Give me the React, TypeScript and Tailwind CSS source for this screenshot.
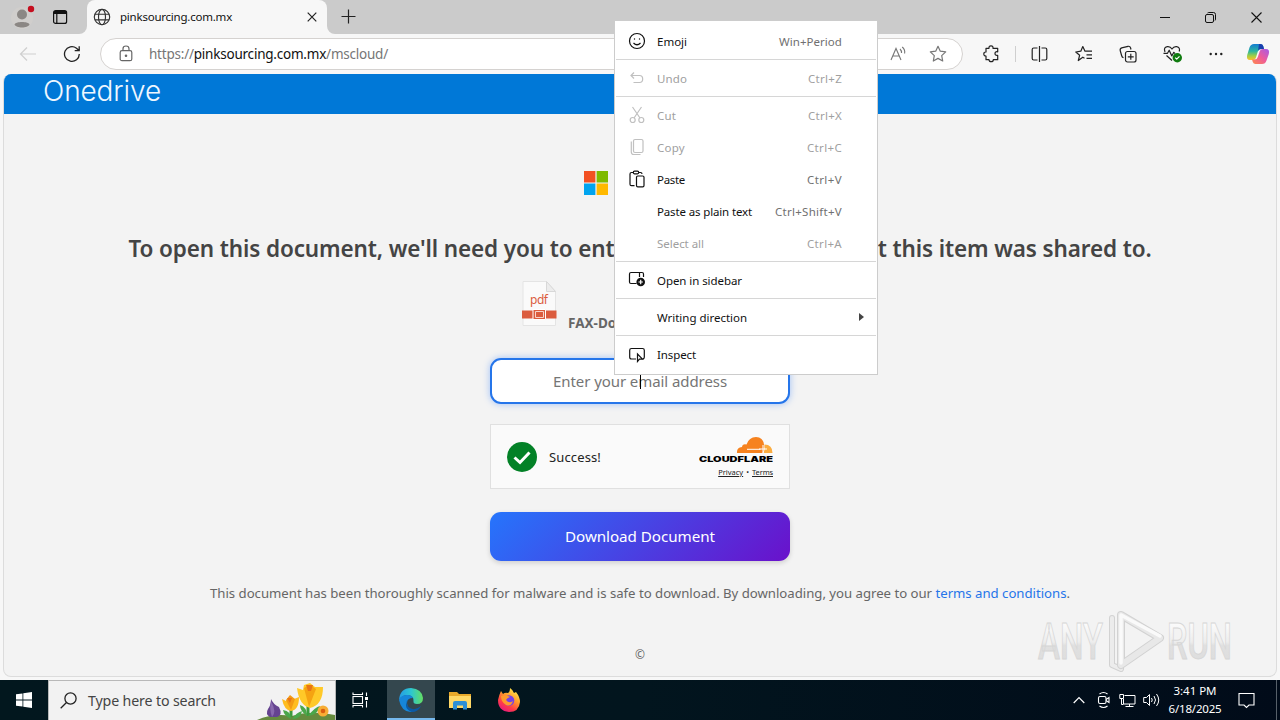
import { useLayoutEffect, useRef } from 'react';
import type { ReactNode } from 'react';

/** Single line of text, tracked so that it fills the given width. */
function Fit({ w, className = '', children }: { w: number; className?: string; children: ReactNode }) {
  const ref = useRef<HTMLSpanElement>(null);
  useLayoutEffect(() => {
    const el = ref.current;
    if (!el) return;
    el.style.letterSpacing = '0px';
    const n = (el.textContent || '').length;
    const natural = el.getBoundingClientRect().width;
    el.style.letterSpacing = `${(w - natural) / n}px`;
  }, [w]);
  return <span ref={ref} className={`inline-block shrink-0 whitespace-pre ${className}`}>{children}</span>;
}

function TabBar() {
  return (
    <div className="flex h-[34px] shrink-0 bg-[#f7f7f7]">
      <div className="flex w-[87px] items-center rounded-br-lg bg-[#cbcbcb] pl-[11px]">
        <svg width="24" height="26" viewBox="0 0 24 26" className="-mt-px">
          <circle cx="11" cy="14" r="11" fill="#d0cecc" />
          <circle cx="11" cy="10.500" r="5" fill="#8b8784" />
          <path d="M3.500 20.500C4 17 18 17 18.500 20.500C17 24.500 5 24.500 3.500 20.500Z" fill="#8b8784" />
          <circle cx="20" cy="5" r="3.200" fill="#c50f1f" />
        </svg>
        <svg width="16" height="16" viewBox="0 0 16 16" className="ml-[17px]" fill="none" stroke="#111" strokeWidth="1.200">
          <rect x="1.600" y="1.600" width="13" height="12.800" rx="2" />
          <path d="M2 3.500H14.500" strokeWidth="3" />
          <path d="M4.800 4V14" />
        </svg>
      </div>
      <div className="w-[240px] bg-[#cbcbcb]">
        <div className="flex h-full items-center rounded-t-lg bg-[#f7f7f7] pl-[6px]">
          <svg width="18" height="18" viewBox="0 0 18 18" fill="none" stroke="#333" strokeWidth="1.150">
            <circle cx="9" cy="9" r="7.700" /><ellipse cx="9" cy="9" rx="3.500" ry="7.700" /><path d="M2 6.200H16M2 11.800H16" />
          </svg>
          <Fit w={112} className="ml-[9px] text-[11.500px] text-[#111]">pinksourcing.com.mx</Fit>
          <svg width="10" height="10" viewBox="0 0 10 10" className="ml-[75px]" stroke="#222" strokeWidth="1.200"><path d="M.7.7 9.300 9.300M9.300.7.7 9.300" /></svg>
        </div>
      </div>
      <div className="flex grow items-center rounded-bl-lg bg-[#cbcbcb] pl-[14px]">
        <svg width="15" height="15" viewBox="0 0 15 15" className="-mt-px" stroke="#222" strokeWidth="1.200"><path d="M7.500.5V14.500M.5 7.500H14.500" /></svg>
      </div>
      <div className="flex items-center bg-[#cbcbcb] pr-[18px]">
        <svg width="10" height="10" viewBox="0 0 10 10" stroke="#111"><path d="M0 5.500H10" /></svg>
        <svg width="11" height="11" viewBox="0 0 11 11" className="ml-[35px]" fill="none" stroke="#111"><rect x=".5" y="2.500" width="8" height="8" rx="1.500" /><path d="M2.500 1C3 .6 3.500.5 4 .5H8.500Q10.500.5 10.500 2.500V7Q10.500 8 10 8.500" /></svg>
        <svg width="11" height="11" viewBox="0 0 11 11" className="ml-[35px]" stroke="#111" strokeWidth="1.100"><path d="M.5.5 10.500 10.500M10.500.5.5 10.500" /></svg>
      </div>
    </div>
  );
}

function Copilot() {
  return (
    <svg width="24" height="24" viewBox="0 0 24 24">
      <defs>
        <linearGradient id="cpA" x1="0" y1="0" x2="0" y2="1"><stop stopColor="#147bd1" /><stop offset=".45" stopColor="#2bb5a0" /><stop offset=".75" stopColor="#a3cf43" /><stop offset="1" stopColor="#ffbf2e" /></linearGradient>
        <linearGradient id="cpB" x1="1" y1="0" x2="0" y2="1"><stop stopColor="#a55be8" /><stop offset=".5" stopColor="#ee5b9b" /><stop offset="1" stopColor="#ff8a4c" /></linearGradient>
      </defs>
      <path d="M8 2H14.500Q16.500 2 17.200 4L18 7H15Q12.500 7 11.800 9.500L10 15.500Q9.300 18 7 18H4Q0 18 1.200 13L3.500 5.500Q4.600 2 8 2Z" fill="url(#cpA)" />
      <path d="M13 2H14.500Q16.500 2 17.200 4L18 7H15Q12.700 7 12 9Z" fill="#1a3fae" />
      <path d="M16 22H9.500Q7.500 22 6.800 20L6 17.500H8.500Q11 17.500 11.800 15L13.800 9Q14.500 7 17 7H20Q24 7 22.800 12L20.500 18.500Q19.400 22 16 22Z" fill="url(#cpB)" />
    </svg>
  );
}

function Toolbar() {
  return (
    <div className="flex h-[40px] shrink-0 items-center bg-[#f7f7f7] pl-[19px] pr-[10px]">
      <svg width="18" height="16" viewBox="0 0 18 16" fill="none" stroke="#cfcfcf" strokeWidth="1.200"><path d="M17 8H1.500M8 1.500 1.500 8 8 14.500" /></svg>
      <svg width="18" height="18" viewBox="0 0 18 18" className="ml-[26px]" fill="none" stroke="#222" strokeWidth="1.300"><path d="M16.300 9A7.400 7.400 0 1 1 13.500 3.200L16 5.500M16.200 1.200V5.700H11.700" /></svg>
      <div className="ml-[19px] flex h-8 w-[863px] items-center rounded-full border border-[#d5d2d0] bg-white pl-[18px] pr-[15px]">
        <svg width="14" height="17" viewBox="0 0 14 17" className="-mt-px" fill="none" stroke="#666" strokeWidth="1.200"><rect x="1.200" y="5.700" width="11.600" height="10" rx="1.800" /><path d="M4 5.500V3.800Q4 1 7 1T10 3.800V5.500" /><circle cx="7" cy="10.700" r=".7" fill="#666" /></svg>
        <Fit w={239} className="ml-[16px] text-[13.500px] text-[#767676]">https://<span className="text-[#111]">pinksourcing.com.mx</span>/mscloud/</Fit>
        <div className="grow" />
        <svg width="17" height="16" viewBox="0 0 17 16" className="-mt-px" fill="none" stroke="#777" strokeWidth="1.100"><path d="M1 14 6 2.500 11 14M2.800 10H9.200M10 3Q11.800 4.700 11.500 7M12.200 1Q15.400 3.800 14.600 7.500" /></svg>
        <svg width="18" height="18" viewBox="0 0 18 18" className="ml-[22px]" fill="none" stroke="#777" strokeWidth="1.200" strokeLinejoin="round"><path d="M9 1.300 11.300 6.200 16.700 6.900 12.700 10.600 13.700 16 9 13.400 4.300 16 5.300 10.600 1.300 6.900 6.700 6.200Z" /></svg>
      </div>
      <svg width="18" height="18" viewBox="0 0 18 18" className="ml-[20px]" fill="none" stroke="#222" strokeWidth="1.200" strokeLinejoin="round"><path d="M3 3.300H6Q5.800.8 8 .8T10 3.300H14.700V6.800Q12 6.200 12 8.500T14.700 10.300V14.700H10.300Q10.300 16.700 8.200 16.700T6 14.700H3V11Q.8 11 .8 9T3 7Z" /></svg>
      <div className="ml-[14px] h-[16px] w-px bg-[#cfcfcf]" />
      <svg width="17" height="18" viewBox="0 0 17 18" className="ml-[15px]" fill="none" stroke="#222" strokeWidth="1.200"><path d="M6.500 3H2.800Q1.200 3 1.200 4.500V13.500Q1.200 15 2.800 15H6.500M10.500 3H14.200Q15.800 3 15.800 4.500V13.500Q15.800 15 14.200 15H10.500M8.500 1V17" /></svg>
      <svg width="18" height="18" viewBox="0 0 18 18" className="ml-[27px]" fill="none" stroke="#222" strokeWidth="1.200" strokeLinejoin="round"><path d="M9.500 13.200 7.800 12.200 3.300 15.500 4.600 10.300.8 7 5.800 6.200 7.800 1.500 10 6.200H17M11.500 9.800H17M11.500 13.400H17" /></svg>
      <svg width="18" height="18" viewBox="0 0 18 18" className="ml-[26px]" fill="none" stroke="#222" strokeWidth="1.200"><rect x="6.500" y="6.500" width="10.500" height="10.500" rx="2" /><path d="M11.800 8.800V14.700M8.800 11.800H14.700M4.500 12.800Q3 12.300 2.600 10.500L1.200 5.500Q.8 3.500 2.700 2.900L9 1.300Q11 .9 11.600 3L12 4.500" /></svg>
      <svg width="20" height="18" viewBox="0 0 20 18" className="ml-[26px]" fill="none" stroke="#222" strokeWidth="1.200" strokeLinejoin="round"><path d="M2 7Q.2 2.300 4.300 1.700Q7.300 1.300 9 4Q10.700 1.300 13.700 1.700Q17.500 2.300 16.200 6.500M3.500 10.500 9 15.500M.5 8.300H4.500L6.200 5.200 8.800 11 10.800 7.300 12 8.500" /><circle cx="14.300" cy="12.700" r="4.700" fill="#107c10" stroke="none" /><path d="M12.200 12.700 13.700 14.200 16.500 11.300" stroke="#fff" /></svg>
      <svg width="14" height="4" viewBox="0 0 14 4" className="ml-[26px]" fill="#222"><circle cx="1.700" cy="2" r="1.200" /><circle cx="7" cy="2" r="1.200" /><circle cx="12.300" cy="2" r="1.200" /></svg>
      <div className="grow" />
      <Copilot />
    </div>
  );
}

function Cloudflare() {
  return (
    <svg width="74" height="27" viewBox="0 0 74 27">
      <path d="M38 16Q37.500 10.500 43 10Q43.500 6.500 47.500 7.500Q50 0 57 0Q64 0 65 7.500Q66 11.500 63.500 16Z" fill="#f6821f" />
      <path d="M64.500 16Q66.500 12 65.500 7.500Q73.500 7.500 73.500 16Z" fill="#fbad41" />
      <path d="M48 12.300H61.500M64 8V16M60 12H68" stroke="#fff" strokeWidth="1" />
      <text x="0" y="25" fontFamily="Inter" fontWeight="900" fontSize="7.800" textLength="74" lengthAdjust="spacingAndGlyphs" fill="#000">CLOUDFLARE</text>
    </svg>
  );
}

function Page() {
  return (
    <div className="mx-[3px] flex h-[603px] shrink-0 flex-col items-center overflow-hidden rounded-lg border border-[#dcdcdc] border-t-0 bg-[#f3f3f3]">
      <div className="h-[40px] w-full shrink-0 bg-[#0078d7] pl-[39px] leading-[34px]">
        <Fit w={118} className="font-['Inter'] text-[28px] font-[350] text-[#eef7ff]">Onedrive</Fit>
      </div>
      <div className="mt-[57px] flex w-[112px] shrink-0">
        <svg width="24" height="24" viewBox="0 0 24 24"><path fill="#f25022" d="M0 0H11.400V11.400H0Z" /><path fill="#7fba00" d="M12.600 0H24V11.400H12.600Z" /><path fill="#00a4ef" d="M0 12.600H11.400V24H0Z" /><path fill="#ffb900" d="M12.600 12.600H24V24H12.600Z" /></svg>
      </div>
      <div className="mt-[38px] h-[32px] text-[22.500px] leading-[32px] font-semibold text-[#444]">
        <Fit w={1023}>To open this document, we'll need you to enter the email address that this item was shared to.</Fit>
      </div>
      <div className="mt-[16px] flex h-[50px] w-[236px]">
        <svg width="36" height="46" viewBox="0 0 36 46" className="shrink-0">
          <path d="M1 .5H24.500L33.500 10.500V44.500H1Z" fill="#fafafa" stroke="#e4e4e4" />
          <path d="M24.500.5V10.500H33.500Z" fill="#ececec" stroke="#d8d8d8" />
          <text x="8" y="23" fontSize="12" fontFamily="Noto Sans" textLength="18" fill="#db5c3e">pdf</text>
          <path d="M0 29.500H34.500V37.500H0Z" fill="#db5c3e" />
          <path d="M11 28.500H23.500V38.500H11Z" fill="#db5c3e" stroke="#fff" />
          <path d="M13.500 30.500H21.500V36.500H13.500Z" fill="none" stroke="#f8d4ca" />
        </svg>
        <Fit w={176} className="ml-[10px] mt-[32px] text-[13.500px] leading-[20px] font-bold text-[#666]">FAX-Document 061825.pdf</Fit>
      </div>
      <div className="mt-[27px] flex h-[46px] w-[300px] shrink-0 items-center justify-center rounded-[11px] border-2 border-[#2575ea] bg-white shadow-[0_0_7px_rgba(37,117,252,0.4)]">
        <Fit w={174} className="text-[15px] text-[#757575]">Enter your email address</Fit>
        <div className="-ml-[87px] h-[16px] w-px bg-black" />
        <div className="w-[86px]" />
      </div>
      <div className="mt-[20px] flex h-[65px] w-[300px] shrink-0 items-center border border-[#e0e0e0] bg-[#fafafa] pl-[16px] pr-[16px]">
        <svg width="30" height="30" viewBox="0 0 30 30"><circle cx="15" cy="15" r="15" fill="#038127" /><path d="M7.500 15.500 13 20.500 22.500 10.500" fill="none" stroke="#fff" strokeWidth="3" /></svg>
        <Fit w={52} className="ml-[12px] mt-[2px] text-[13px] text-[#232323]">Success!</Fit>
        <div className="grow" />
        <div className="flex flex-col items-end">
          <Cloudflare />
          <div className="mt-[4px] flex h-[9px] items-center text-[7.500px] leading-[9px] text-[#232323]"><Fit w={25} className="underline">Privacy</Fit><span className="mx-[3px]">•</span><Fit w={21} className="underline">Terms</Fit></div>
        </div>
      </div>
      <div className="mt-[23px] flex h-[49px] w-[300px] shrink-0 items-center justify-center rounded-[11px] bg-[linear-gradient(135deg,#2575fc,#6a11cb)] text-[15.200px] text-white shadow-[0_2px_5px_rgba(0,0,0,0.15)]"><Fit w={150}>Download Document</Fit></div>
      <div className="mt-[22px] h-[20px] text-[13.200px] leading-[20px] text-[#666]">
        <Fit w={860}>This document has been thoroughly scanned for malware and is safe to download. By downloading, you agree to our <span className="text-[#2575ea]">terms and conditions</span>.</Fit>
      </div>
      <div className="mt-[42px] text-[12px] leading-[20px] text-[#666]">©</div>
    </div>
  );
}

const emoji = <svg width="18" height="18" viewBox="0 0 18 18" fill="none" stroke="currentColor" strokeWidth="1.200"><circle cx="9" cy="9" r="7.500" /><path d="M5.500 11Q9 14.500 12.500 11" /><circle cx="6.500" cy="7" r=".7" fill="currentColor" stroke="none" /><circle cx="11.500" cy="7" r=".7" fill="currentColor" stroke="none" /></svg>;
const undo = <svg width="18" height="18" viewBox="0 0 18 18" fill="none" stroke="currentColor" strokeWidth="1.200"><path d="M6 3.500 3 6.500 6 9.500M3 6.500H11.500Q14.700 6.500 14.700 10T11.500 13.500H5.500" /></svg>;
const cut = <svg width="18" height="18" viewBox="0 0 18 18" fill="none" stroke="currentColor" strokeWidth="1.200"><circle cx="4.700" cy="14" r="2.500" /><circle cx="13.300" cy="14" r="2.500" /><path d="M4.500 1 12 12M13.500 1 6 12" /></svg>;
const copy = <svg width="18" height="18" viewBox="0 0 18 18" fill="none" stroke="currentColor" strokeWidth="1.200"><rect x="5.500" y="1.500" width="9.500" height="13" rx="1.500" /><path d="M3.300 3.500V14Q3.300 16.500 5.800 16.500H12.500" /></svg>;
const paste = <svg width="18" height="18" viewBox="0 0 18 18" fill="none" stroke="currentColor" strokeWidth="1.200"><rect x="8.500" y="6" width="7.500" height="10.800" rx="1.300" /><path d="M6.500 15.700H3.500Q2 15.700 2 14.200V4Q2 2.500 3.500 2.500H5.300M10.700 2.500H12.500Q14 2.500 14 4" /><rect x="5.300" y="1.200" width="5.400" height="2.600" rx="1.200" /></svg>;
const sidebar = <svg width="18" height="18" viewBox="0 0 18 18" fill="none" stroke="currentColor" strokeWidth="1.200"><path d="M8.500 12.500H3Q1.500 12.500 1.500 11V3Q1.500 1.500 3 1.500H14Q15.500 1.500 15.500 3V6M11.500 1.500V6" /><circle cx="12.700" cy="11" r="4.300" fill="currentColor" stroke="none" /><path d="M12.700 8.800V13.200M10.500 11H14.900" stroke="#fff" /></svg>;
const inspect = <svg width="18" height="18" viewBox="0 0 18 18" fill="none" stroke="currentColor" strokeWidth="1.200"><path d="M8 14H3.500Q1.700 14 1.700 12.300V5.300Q1.700 3.500 3.500 3.500H14.500Q16.300 3.500 16.300 5.300V12.300Q16.300 14 14.500 14" /><path d="M9.500 9V16.500L11.500 14.200H14.500Z" fill="#fff" /></svg>;

function Item({ icon, label, w, keys, kw = 0, off, arrow }: { icon?: ReactNode; label: string; w: number; keys?: string; kw?: number; off?: boolean; arrow?: boolean }) {
  return (
    <div className={`flex h-8 shrink-0 items-center pl-[13px] pr-[35px] text-[11.500px] ${off ? 'text-[#a0a0a0]' : 'text-[#111]'}`}>
      <div className={`mr-[11px] w-[18px] shrink-0 ${off ? 'text-[#c0c0c0]' : ''}`}>{icon}</div>
      <Fit w={w} className="mt-[2px]">{label}</Fit>
      <div className="grow" />
      {keys && <Fit w={kw} className={`mt-[2px] ${off ? '' : 'text-[#707070]'}`}>{keys}</Fit>}
      {arrow && <svg width="5" height="8" viewBox="0 0 5 8" className="-mr-[22px]"><path d="M0 0 5 4 0 8Z" fill="#444" /></svg>}
    </div>
  );
}

const Rule = () => <div className="mx-px my-[2px] h-px shrink-0 bg-[#d6d6d6]" />;

function ContextMenu() {
  return (
    <div className="absolute left-[614px] top-[20px] flex h-[355px] w-[264px] flex-col border border-[#ccc] bg-white pt-[4px]">
      <Item icon={emoji} label="Emoji" w={30} keys="Win+Period" kw={63} />
      <Rule />
      <Item icon={undo} label="Undo" w={30} keys="Ctrl+Z" kw={34} off />
      <Rule />
      <Item icon={cut} label="Cut" w={19} keys="Ctrl+X" kw={34} off />
      <Item icon={copy} label="Copy" w={28} keys="Ctrl+C" kw={35} off />
      <Item icon={paste} label="Paste" w={28} keys="Ctrl+V" kw={35} />
      <Item label="Paste as plain text" w={95} keys="Ctrl+Shift+V" kw={67} />
      <Item label="Select all" w={47} keys="Ctrl+A" kw={35} off />
      <Rule />
      <Item icon={sidebar} label="Open in sidebar" w={85} />
      <Rule />
      <Item label="Writing direction" w={90} arrow />
      <Rule />
      <Item icon={inspect} label="Inspect" w={39} />
    </div>
  );
}

function Watermark() {
  return (
    <svg className="absolute left-[1034px] top-[604px]" width="220" height="74" viewBox="0 0 220 74" fill="none">
      <defs>
        <linearGradient id="wm" x1="0" y1="0" x2="0" y2="1"><stop offset=".2" stopColor="#fafafa" /><stop offset=".5" stopColor="#ededed" /><stop offset=".56" stopColor="#e0e0e0" /><stop offset="1" stopColor="#dcdcdc" /></linearGradient>
      </defs>
      <g fontFamily="Roboto" fontWeight="500" fontSize="50" fill="url(#wm)" stroke="#d6d6d6" strokeWidth="1">
        <text x="4" y="55" textLength="65" lengthAdjust="spacingAndGlyphs">ANY</text>
        <text x="133" y="55" textLength="65" lengthAdjust="spacingAndGlyphs">RUN</text>
      </g>
      <g strokeLinejoin="round" strokeLinecap="round">
        <path d="M78 14V61L87 65" stroke="#d2d2d2" strokeWidth="6" /><path d="M78 14V61L87 65" stroke="#ececec" strokeWidth="4" />
        <path d="M87 11 126 34 87 61Z" stroke="#d2d2d2" strokeWidth="8" />
        <path d="M87 11 126 34 87 61Z" stroke="#e8e8e8" strokeWidth="6" />
        <path d="M87 59V11L126 32" stroke="#fafafa" strokeWidth="3.500" />
      </g>
    </svg>
  );
}

function Flowers() {
  return (
    <svg width="80" height="39" viewBox="0 0 80 39">
      <path d="M2 39Q18 32 37 35Q56 29 80 34V39Z" fill="#668b3e" />
      <path d="M36 36V24M53 35V17" stroke="#3d9a3c" strokeWidth="3" />
      <path d="M36 38Q29 35 28 29Q36 30 36 38ZM37 38Q42 31 47 30Q46 38 37 38ZM52 35Q45 30 45 24Q52 26 52 35ZM53 35Q60 26 65 25Q63 34 53 35Z" fill="#4aa74a" />
      <path d="M16 18Q18 23 24 26Q28 34 22 36H15Q10 33 13 28Q16 24 16 18Z" fill="#654390" /><path d="M16 20Q14 28 17 36Q22 31 16 20Z" fill="#8768ad" />
      <path d="M27 18 31 20 35 15 39 18 44 16Q44 29 36 30Q29 29 27 18Z" fill="#ffbc1f" /><path d="M31 19 36 29 40 18 35 14Z" fill="#f39a13" /><path d="M32 17H37L35 22Z" fill="#e87516" />
      <path d="M42 7 48 9 49 4 55 2 60 6 68 6Q68 24 55 27Q44 24 42 7Z" fill="#ffc928" /><path d="M49 7 54 26 61 8 55 4Z" fill="#f5a311" /><path d="M51 4H58L56 10H53Z" fill="#e87516" />
      <circle cx="68" cy="30" r="5.500" fill="#f7ad35" /><circle cx="68" cy="30" r="2.300" fill="#d95e10" />
    </svg>
  );
}

function Taskbar() {
  return (
    <div className="flex h-[40px] shrink-0 bg-[linear-gradient(90deg,#02171e,#02151e_50%,#010b19)]">
      <div className="flex w-[48px] items-center justify-center"><svg width="16" height="16" viewBox="0 0 16 16" fill="#fff"><path d="M0 2.300 6.500 1.400V7.600H0ZM7.300 1.300 16 0V7.600H7.300ZM0 8.400H6.500V14.600L0 13.700ZM7.300 8.400H16V16L7.300 14.700Z" /></svg></div>
      <div className="flex w-[288px] items-center border border-b-0 border-[#b8b8b8] bg-[#f2f2f2] pl-[11px]">
        <svg width="17" height="17" viewBox="0 0 17 17" fill="none" stroke="#222" strokeWidth="1.300"><circle cx="10.500" cy="6.500" r="5.600" /><path d="M6.500 10.500.7 16.300" /></svg>
        <Fit w={128} className="ml-[11px] text-[14.200px] text-[#444]">Type here to search</Fit>
        <div className="grow" /><Flowers />
      </div>
      <div className="flex w-[51px] items-center justify-center pr-[3px]"><svg width="18" height="16" viewBox="0 0 18 16" fill="none" stroke="#fff" strokeWidth="1.100"><rect x="2" y="4.500" width="9.500" height="7" /><path d="M2 .5V2.500H11.500V.5M2 15.500V13.500H11.500V15.500M15.500.5V4M15.500 9V15.500" /><path d="M14 5H17V8H14Z" fill="#fff" stroke="none" /></svg></div>
      <div className="flex w-[48px] items-center justify-center border-b-2 border-[#76b9ed] bg-[#34474e] pt-[2px]">
        <svg width="24" height="24" viewBox="0 0 24 24">
          <defs><linearGradient id="eg" x1="0" y1=".4" x2="1" y2=".4"><stop stopColor="#249be5" /><stop offset=".5" stopColor="#2dc6d1" /><stop offset="1" stopColor="#64df62" /></linearGradient></defs>
          <path d="M0 12Q1 0 12 0Q23 1 24 10Q24 16 18 16Q14 16 14.500 13Q15 8 9 7Q3 7 0 12Z" fill="url(#eg)" />
          <path d="M0 12Q2 6.500 9 7Q13 7.300 14 10Q8 10 8 15Q8 21 15 23.500Q3 26 0 12Z" fill="#1686d9" />
          <path d="M8.500 11.500Q6 17 11 20Q16 23 22 18Q19 24 13 24Q4 21 8.500 11.500Z" fill="#0c59a4" />
        </svg>
      </div>
      <div className="flex w-[49px] items-center justify-center"><svg width="22" height="19" viewBox="0 0 22 19"><path d="M0 1H8L10 3H22V17H0Z" fill="#e8a92b" /><path d="M0 5H22V17H0Z" fill="#ffd866" /><path d="M4 18.500V12Q4 10 6 10H16Q18 10 18 12V18.500H14V14.500H8V18.500Z" fill="#2d8fd5" /></svg></div>
      <div className="flex w-[49px] items-center justify-center"><svg width="24" height="24" viewBox="0 0 24 24">
        <defs><linearGradient id="ff" x1=".8" y1="0" x2=".2" y2="1"><stop stopColor="#fff44f" /><stop offset=".4" stopColor="#ff9a2c" /><stop offset=".7" stopColor="#ff3b47" /><stop offset="1" stopColor="#e31587" /></linearGradient></defs>
        <path d="M4 3 6 6Q8 4 11 5Q13 4 13 0Q16 2 17 5L19 4Q23 9 23 14Q22 24 12 24Q1 23 1 12Q2 7 4 3Z" fill="url(#ff)" /><circle cx="12" cy="12.500" r="5.300" fill="#7542e5" /><path d="M4 8Q9 6 13 9Q10 10 9 12Q12 16 16 13Q14 19 9 17Q4 14 4 8Z" fill="#ff9a2c" />
      </svg></div>
      <div className="grow" />
      <div className="flex items-center text-white">
        <svg width="12" height="8" viewBox="0 0 12 8" fill="none" stroke="#fff" strokeWidth="1.200"><path d="M.7 7 6 1.500 11.300 7" /></svg>
        <svg width="14" height="18" viewBox="0 0 14 18" className="ml-[12px]" fill="none" stroke="#fff" strokeWidth="1.100"><rect x="1.500" y="5.500" width="7.500" height="7" rx="1.500" /><path d="M9 8.500 12 6.500V11.500L9 9.500M2.500 3Q6.500 0 10.500 3M2.500 15Q6.500 18 10.500 15" /></svg>
        <svg width="17" height="15" viewBox="0 0 17 15" className="ml-[8px]" fill="none" stroke="#fff"><path d="M5.500 2.500H16V11H4.500V6M10.500 11V13.500M6.500 13.500H14.500M.8 1.500H4.500V5.500H.8ZM2.500 5.500V11.500H4.500" /></svg>
        <svg width="18" height="14" viewBox="0 0 18 14" className="ml-[7px]" fill="none" stroke="#fff"><path d="M.7 4.500H3.500L6.500 1.500V12.500L3.500 9.500H.7ZM8.500 5Q10 7 8.500 9M11 3Q14 7 11 11M13.500 1Q18 7 13.500 13" /></svg>
        <div className="ml-[7px] flex w-[54px] flex-col items-center text-[11.500px] leading-[18px]"><Fit w={43}>3:41 PM</Fit><Fit w={53}>6/18/2025</Fit></div>
        <svg width="17" height="17" viewBox="0 0 17 17" className="ml-[16px] mr-[21px]" fill="none" stroke="#fff" strokeWidth="1.100"><path d="M1 1.500H16V13H11L8.500 15.500 6 13H1Z" /></svg>
        <div className="mr-[3px] h-full w-px bg-[#576069]" />
      </div>
    </div>
  );
}

export default function App() {
  return (
    <div className="relative flex h-[720px] w-[1280px] flex-col overflow-hidden bg-[#f7f7f7] font-['Noto_Sans',sans-serif]">
      <TabBar />
      <Toolbar />
      <Page />
      <div className="grow" />
      <Taskbar />
      <Watermark />
      <ContextMenu />
    </div>
  );
}
